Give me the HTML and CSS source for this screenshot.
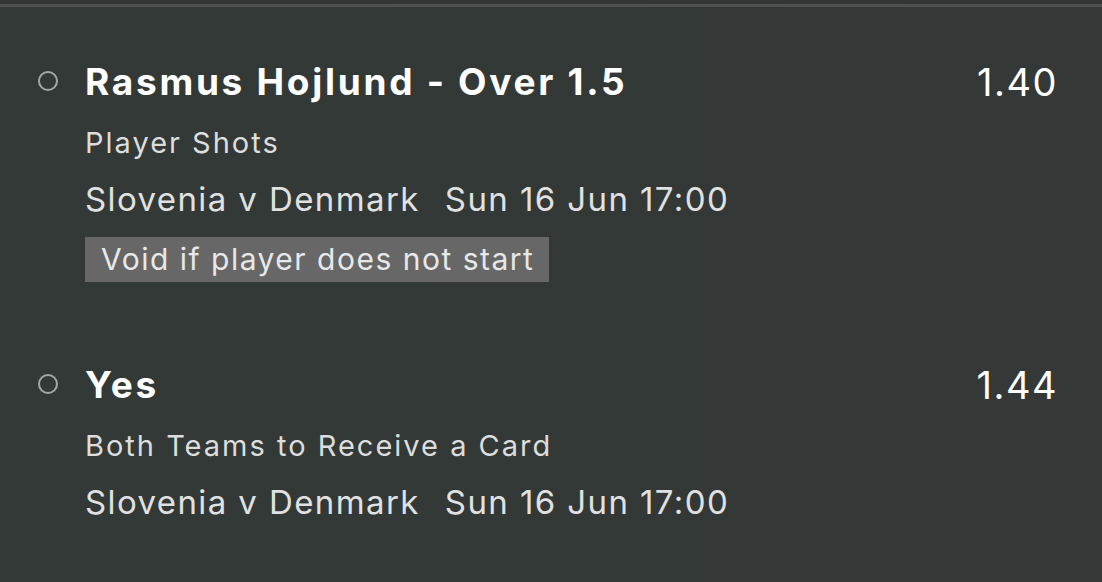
FILE: index.html
```html
<!DOCTYPE html>
<html lang="en">
<head>
<meta charset="utf-8">
<title>Bet slip</title>
<link rel="stylesheet" href="styles.css">
</head>
<body>
<div class="screen">
  <div class="topbar"></div>
  <ul class="legs">
    <li class="leg">
      <span class="dot"></span>
      <div class="info">
        <div class="title">Rasmus Hojlund - Over 1.5</div>
        <div class="market">Player Shots</div>
        <div class="match"><span>Slovenia v Denmark</span><span>Sun 16 Jun 17:00</span></div>
        <div class="badge">Void if player does not start</div>
      </div>
      <div class="odds">1.40</div>
    </li>
    <li class="leg">
      <span class="dot"></span>
      <div class="info">
        <div class="title">Yes</div>
        <div class="market">Both Teams to Receive a Card</div>
        <div class="match"><span>Slovenia v Denmark</span><span>Sun 16 Jun 17:00</span></div>
      </div>
      <div class="odds">1.44</div>
    </li>
  </ul>
</div>
</body>
</html>
```
FILE: styles.css
```css
html, body {
  margin: 0;
  padding: 0;
  background: #333837;
}
body {
  font-family: Inter, "Noto Sans", "Liberation Sans", sans-serif;
  width: 1102px;
  height: 582px;
  overflow: hidden;
}
.screen {
  height: 582px;
  background: linear-gradient(90deg, #323936 0%, #343837 100%);
}
.topbar {
  height: 4px;
  background: #323635;
  border-bottom: 3px solid #4d5251;
}
.legs {
  list-style: none;
  margin: 0;
  padding: 53px 44px 0 38px;
  display: flex;
  flex-direction: column;
  gap: 81px;
}
.leg {
  display: flex;
  align-items: flex-start;
}
.dot {
  width: 16px;
  height: 16px;
  border: 2.5px solid #a6a8a7;
  border-radius: 50%;
  margin-top: 11px;
  flex: none;
}
.info {
  margin-left: 27px;
  flex: 1;
  display: flex;
  flex-direction: column;
  align-items: flex-start;
}
.title {
  font-size: 37px;
  font-weight: 700;
  line-height: 44px;
  letter-spacing: 2.7px;
  color: #ffffff;
  margin-bottom: 21px;
}
.market {
  font-size: 29px;
  line-height: 36px;
  letter-spacing: 2px;
  color: #dcdddc;
  margin-bottom: 18px;
}
.match {
  font-size: 33px;
  line-height: 40px;
  letter-spacing: 1.4px;
  color: #e0e1e0;
  display: flex;
  gap: 25px;
}
.badge {
  margin-top: 18px;
  height: 45px;
  line-height: 45px;
  padding: 0 15px 0 16px;
  background: #666766;
  color: #e8e8e8;
  font-size: 30px;
  letter-spacing: 1.5px;
}
.odds {
  font-size: 38px;
  line-height: 44px;
  letter-spacing: 1.5px;
  color: #ffffff;
  flex: none;
}
```
